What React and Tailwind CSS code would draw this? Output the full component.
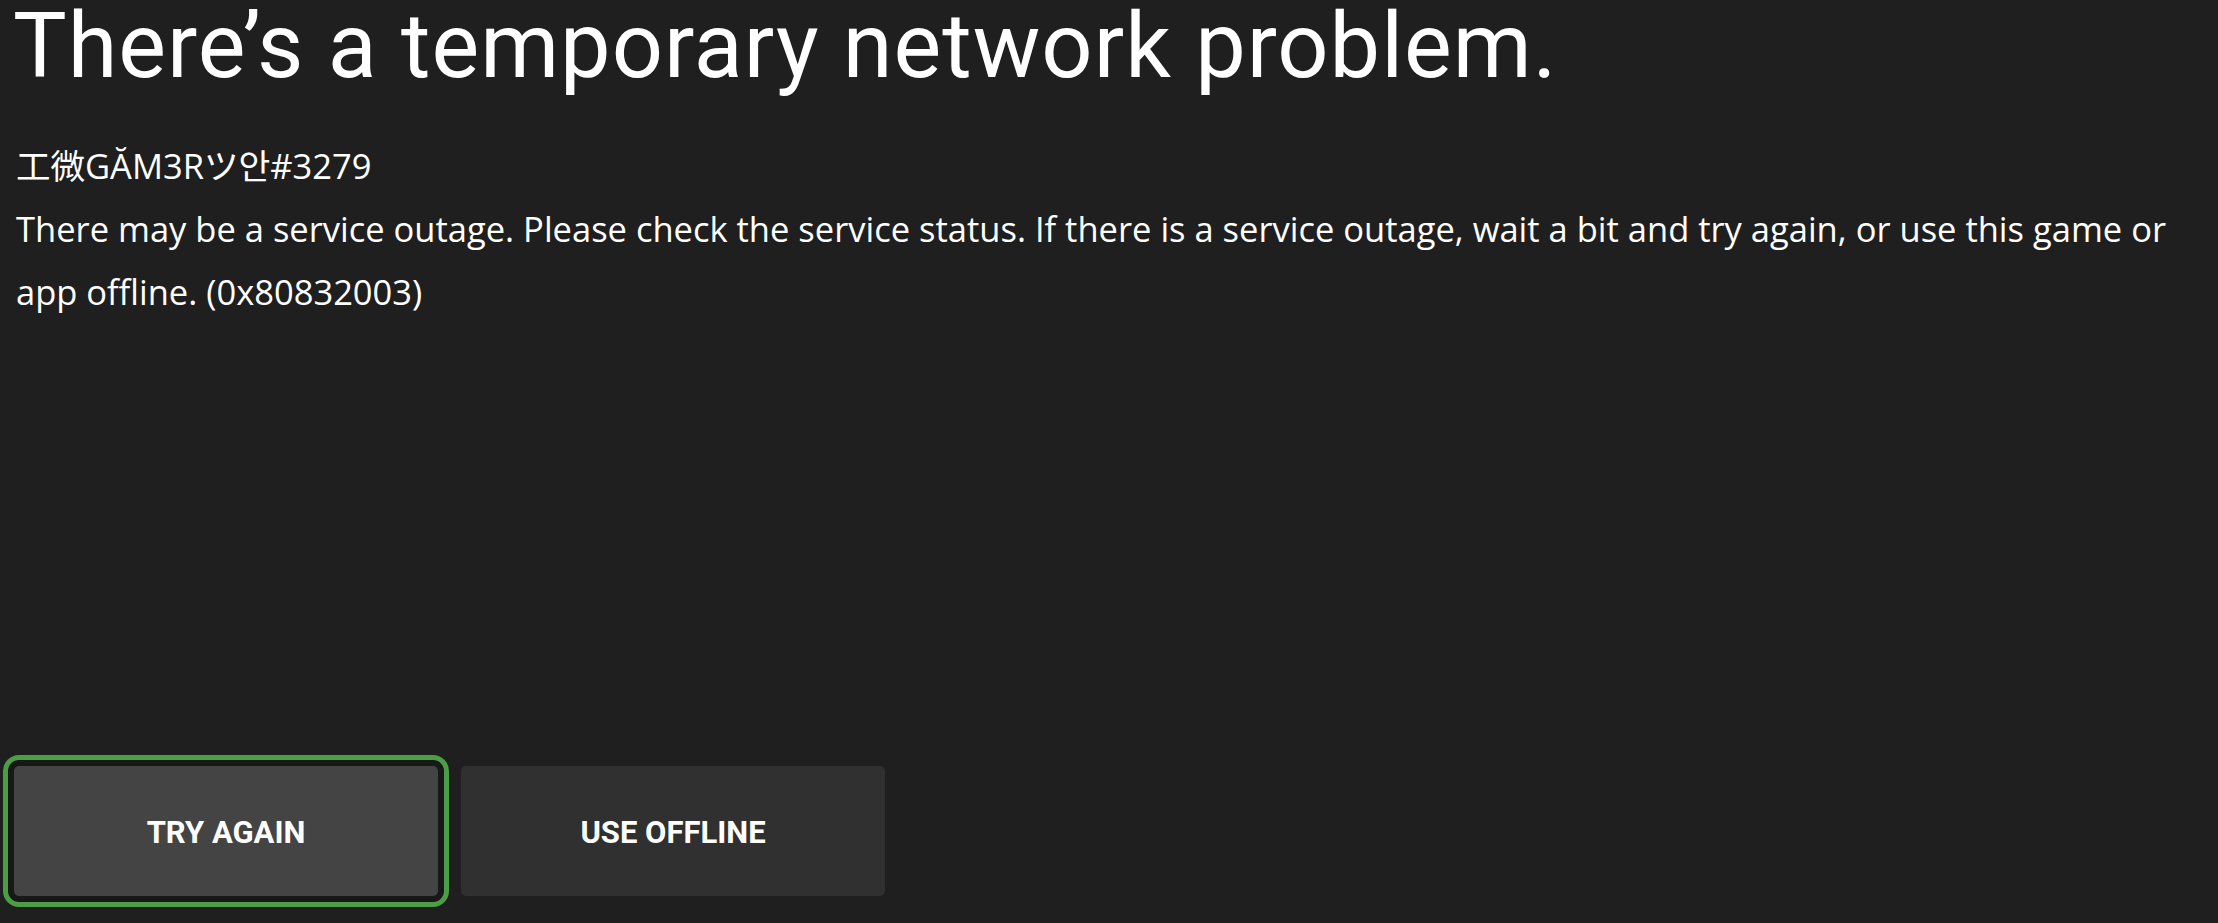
export default function App() {
  return (
    <div className="w-[2218px] h-[923px] bg-[#1f1f1f] text-white flex flex-col overflow-hidden">
      {/* Heading */}
      <h1
        className="pt-[2px] pl-[13px] text-[90px] leading-none tracking-[1px]"
        style={{ fontFamily: 'Roboto, sans-serif' }}
      >
        There’s a temporary network problem.
      </h1>

      {/* Gamertag + message */}
      <div
        className="mt-[42px] pl-[16px] text-[34.5px] leading-[63px]"
        style={{ fontFamily: '"Open Sans", "Noto Sans CJK JP", "Noto Sans CJK KR", sans-serif' }}
      >
        <p>工微GĂM3Rツ안#3279</p>
        <p>
          There may be a service outage. Please check the service status. If there is a service outage, wait a bit and try again, or use this game or app offline. (0x80832003)
        </p>
      </div>

      {/* Actions */}
      <div className="mt-auto pl-[14px] pb-[27px] flex gap-[23px]" style={{ fontFamily: 'Roboto, sans-serif' }}>
        <button className="w-[424px] h-[130px] pt-[4px] rounded-[5px] bg-[#444444] text-[31px] font-bold shadow-[0_0_0_6px_#181818] outline-[5px] outline-solid outline-[#4c9e45] outline-offset-[6px]">
          TRY AGAIN
        </button>
        <button className="w-[424px] h-[130px] pt-[4px] rounded-[5px] bg-[#303030] text-[31px] font-bold">
          USE OFFLINE
        </button>
      </div>
    </div>
  );
}
